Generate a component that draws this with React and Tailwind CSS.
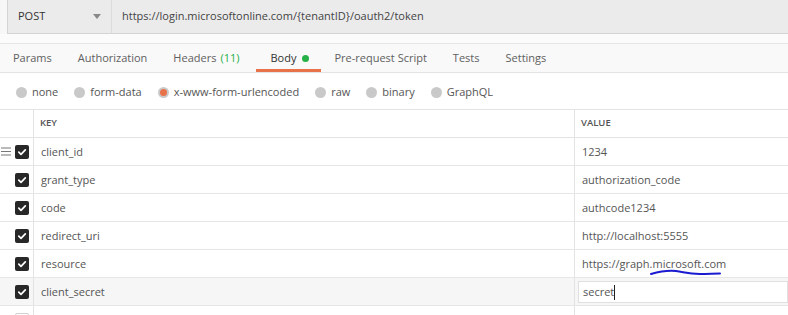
import React from "react";

const tabs = [
  { label: "Params" },
  { label: "Authorization" },
  { label: "Headers", count: "(11)" },
  { label: "Body", active: true },
  { label: "Pre-request Script" },
  { label: "Tests" },
  { label: "Settings" },
];

const bodyTypes = [
  { label: "none" },
  { label: "form-data" },
  { label: "x-www-form-urlencoded", selected: true },
  { label: "raw" },
  { label: "binary" },
  { label: "GraphQL" },
];

const rows = [
  { key: "client_id", value: "1234", handle: true },
  { key: "grant_type", value: "authorization_code" },
  { key: "code", value: "authcode1234" },
  { key: "redirect_uri", value: "http://localhost:5555" },
  { key: "resource", value: "https://graph.microsoft.com", scribble: true },
  { key: "client_secret", value: "secret", editing: true },
];

const Checkbox = () => (
  <div className="w-[14px] h-[14px] rounded-[2px] bg-[#282828] flex items-center justify-center">
    <svg width="10" height="10" viewBox="0 0 10 10">
      <path d="M1.8 5.2 L4 7.3 L8.3 2.8" fill="none" stroke="#fff" strokeWidth="1.7" strokeLinecap="round" strokeLinejoin="round" />
    </svg>
  </div>
);

export default function App() {
  return (
    <div className="w-[788px] h-[315px] overflow-hidden bg-white text-[11px] text-[#505050] font-['Open_Sans',sans-serif]">
      {/* request bar */}
      <div className="h-[34px] pl-[7px] bg-[#f7f7f7]">
        <div className="h-full flex bg-[#ebebeb] border-b border-l border-[#d4d4d4]">
          <div className="w-[104px] flex items-center justify-between pl-[10px] pr-[10px] border-r border-[#dcdcdc]">
            <span className="text-[#333]">POST</span>
            <svg width="8" height="5" viewBox="0 0 8 5">
              <path d="M0 0 L8 0 L4 5 Z" fill="#888" />
            </svg>
          </div>
          <div className="flex items-center pl-[10px] text-[#444]">
            https://login.microsoftonline.com/{"{tenantID}"}/oauth2/token
          </div>
        </div>
      </div>
      <div className="h-[10px] bg-[#fbfbfb] border-b border-[#e6e6e6]" />

      {/* tabs */}
      <div className="h-[29px] flex bg-[#f9f9f9] border-b border-[#e3e3e3]">
        {tabs.map((t) => (
          <div
            key={t.label}
            className={`h-full flex items-center ${
              t.active
                ? "ml-[4px] pl-[14px] pr-[12px] border-b-[3px] border-[#e8734a] pt-[3px] text-[#333]"
                : "px-[13px] text-[#606060]"
            }`}
          >
            {t.label}
            {t.count && <span className="ml-[4px] text-[#26b047]">{t.count}</span>}
            {t.active && <span className="ml-[6px] w-[7px] h-[7px] rounded-full bg-[#26b047]" />}
          </div>
        ))}
      </div>

      {/* body types */}
      <div className="h-[36px] flex items-center pl-[16px] gap-[16px] pt-[2px]">
        {bodyTypes.map((b) => (
          <div key={b.label} className="flex items-center gap-[5px] text-[#555]">
            <span className="w-[11px] h-[11px] rounded-full bg-[#c9c9c9] flex items-center justify-center">
              {b.selected && <span className="w-[7px] h-[7px] rounded-full bg-[#e8734a]" />}
            </span>
            {b.label}
          </div>
        ))}
      </div>

      {/* key/value table */}
      <div className="border-t border-[#e3e3e3]">
        <div className="h-[28px] flex border-b border-[#e3e3e3] text-[9.5px] font-semibold text-[#555]">
          <div className="w-[34px] border-r border-[#e3e3e3]" />
          <div className="w-[541px] flex items-center pl-[6px] border-r border-[#e3e3e3]">KEY</div>
          <div className="flex-1 flex items-center pl-[6px]">VALUE</div>
        </div>
        {rows.map((r) => (
          <div
            key={r.key}
            className={`h-[28px] flex border-b border-[#e6e6e6] ${r.editing ? "bg-[#f6f6f6]" : ""}`}
          >
            <div className="relative w-[34px] flex items-center justify-end pr-[4px] border-r border-[#e3e3e3]">
              {r.handle && (
                <svg className="absolute left-[1px]" width="10" height="9" viewBox="0 0 10 9">
                  <path d="M0 1 H10 M0 4.5 H10 M0 8 H10" stroke="#777" strokeWidth="1.2" />
                </svg>
              )}
              <Checkbox />
            </div>
            <div className="w-[541px] flex items-center pl-[7px] pt-[1px] border-r border-[#e3e3e3] text-[#555]">
              {r.key}
            </div>
            <div className="flex-1 flex items-center pt-[1px] text-[#555]">
              {r.editing ? (
                <div className="ml-[3px] h-[22px] flex-1 flex items-center pl-[4px] bg-white border border-[#e0e0e0]">
                  secret<span className="w-px h-[15px] bg-[#222]" />
                </div>
              ) : (
                <span className="relative pl-[7px]">
                  {r.value}
                  {r.scribble && (
                    <svg className="absolute left-[75px] top-[12px]" width="72" height="8" viewBox="0 0 72 8">
                      <path d="M1 6 C8 4 16 2 26 3 C34 4 38 6 50 6 C58 6 64 5.5 70 5.5" fill="none" stroke="#1a1ad0" strokeWidth="2" strokeLinecap="round" />
                    </svg>
                  )}
                </span>
              )}
            </div>
          </div>
        ))}
        <div className="h-[28px] flex">
          <div className="w-[34px] flex items-start justify-end pr-[4px] pt-[7px] border-r border-[#e3e3e3]">
            <div className="w-[14px] h-[14px] rounded-[2px] border border-[#d0d0d0]" />
          </div>
          <div className="w-[541px] border-r border-[#e3e3e3]" />
        </div>
      </div>
    </div>
  );
}
